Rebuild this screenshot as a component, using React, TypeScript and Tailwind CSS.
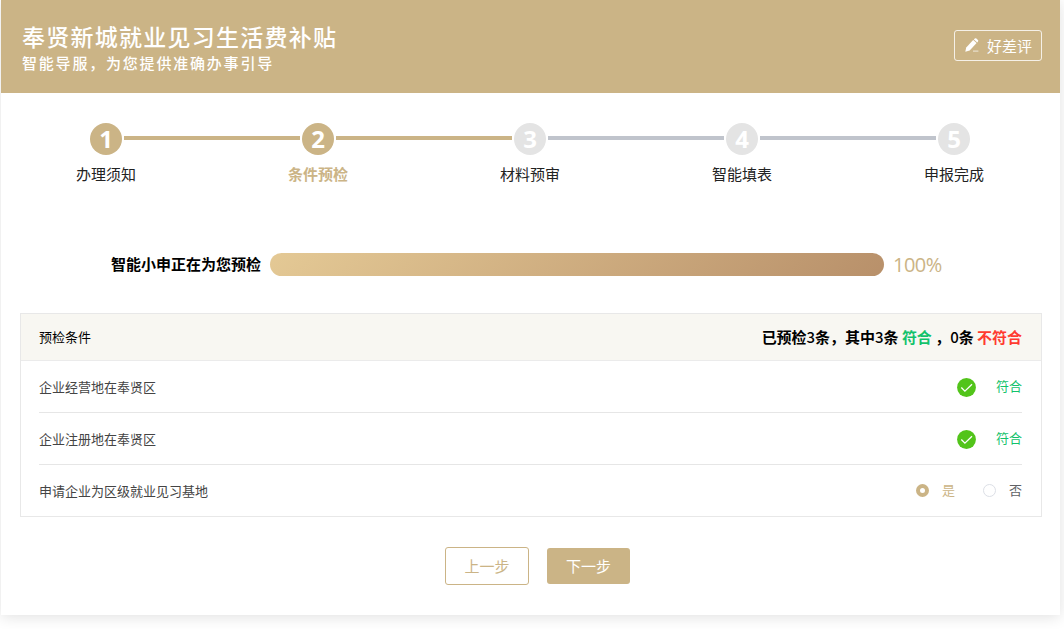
import React, { useState } from 'react';

type StepItem = { label: string; state: 'done' | 'active' | 'todo' };

const steps: StepItem[] = [
  { label: '办理须知', state: 'done' },
  { label: '条件预检', state: 'active' },
  { label: '材料预审', state: 'todo' },
  { label: '智能填表', state: 'todo' },
  { label: '申报完成', state: 'todo' }
];

const conditions = ['企业经营地在奉贤区', '企业注册地在奉贤区'];

const PencilIcon: React.FC = () => (
  <svg width="14" height="15" viewBox="0 0 14 15" fill="#fff">
    <path d="M1.2 9.4 8.2 2.1 11.6 5.1 4.7 12.6 0.3 13.8Z" />
    <path d="M8.9 1.4 9.8 0.6Q10.6 0 11.4 0.6L12.9 1.9Q13.7 2.7 13 3.5L12.3 4.4Z" />
    <path d="M8 12.6h5.4v1H8z" opacity="0.7" />
  </svg>
);

const CheckIcon: React.FC = () => (
  <svg width="19" height="19" viewBox="0 0 19 19" fill="none">
    <circle cx="9.5" cy="9.5" r="9.4" fill="#52c41a" />
    <path d="M4.3 9.5 7.9 13.2 15 6.2" stroke="#fff" strokeWidth="1.3" />
  </svg>
);

const Steps: React.FC = () => (
  <div className="flex pl-[89px] pt-[30px]">
    {steps.map((step, index) => (
      <React.Fragment key={step.label}>
        {index > 0 && (
          <div className={`mx-[2px] mt-[13px] h-1 w-[176px] shrink-0 ${index < 3 ? 'bg-[#cbb486]' : 'bg-[#c0c4cc]'}`} />
        )}
        <div className="flex w-8 shrink-0 flex-col items-center">
          <div
            className={`flex h-8 w-8 items-center justify-center rounded-full font-['Open_Sans'] text-[24px] font-bold leading-8 text-white ${
              step.state === 'todo' ? 'bg-[#e4e4e4]' : 'bg-[#cbb486]'
            }`}
          >
            {index + 1}
          </div>
          <span
            className={`mt-[8px] whitespace-nowrap text-[15px] leading-[22px] ${
              step.state === 'active' ? 'font-bold text-[#cbb486]' : 'text-[#222]'
            }`}
          >
            {step.label}
          </span>
        </div>
      </React.Fragment>
    ))}
  </div>
);

const App: React.FC = () => {
  const [isBase, setIsBase] = useState(true);

  return (
    <div className="h-[629px] overflow-hidden bg-white pl-px font-['Noto_Sans_CJK_SC',sans-serif]">
      <div className="h-[615px] w-[1059px] bg-white shadow-[0_2px_14px_rgba(0,0,0,0.12)]">
        <header className="flex h-[93px] justify-between bg-[#cbb486] pl-[21px] pr-[18px] text-white">
          <div className="pt-[21px]">
            <h1 className="text-[23px] font-medium leading-[30px] tracking-[1.25px]">奉贤新城就业见习生活费补贴</h1>
            <p className="mt-px text-[15px] font-medium leading-[22px] tracking-[1.8px]">智能导服，为您提供准确办事引导</p>
          </div>
          <button className="mt-[30px] flex h-[31px] w-[88px] items-center rounded-[3px] border border-white/80 pl-[10px] text-[15px] leading-[22px]">
            <PencilIcon />
            <span className="ml-[8px] whitespace-nowrap">好差评</span>
          </button>
        </header>

        <Steps />

        <div className="mt-[68px] flex h-[23px] items-center pl-[110px]">
          <span className="w-[150px] whitespace-nowrap pb-[2px] text-[15px] font-bold leading-[22px] text-black">智能小申正在为您预检</span>
          <div className="ml-[9px] h-[23px] w-[614px] rounded-full bg-[linear-gradient(135deg,#e4c995,#b8906a)]" />
          <span className="ml-[9px] font-['Open_Sans'] text-[20px] leading-[23px] tracking-[-0.5px] text-[#cbb486]">100%</span>
        </div>

        <section className="ml-[19px] mt-[37px] h-[204px] w-[1022px] border border-[#e8e8e8]">
          <div className="flex h-[47px] items-center justify-between border-b border-[#ebebeb] bg-[#f8f7f2] pl-[18px] pr-[19px] text-black">
            <span className="text-[13px]">预检条件</span>
            <div className="flex whitespace-pre pt-px text-[15px] font-bold tracking-[-0.03px]">
              <span>已预检<b className="font-medium">3</b>条，其中<b className="font-medium">3</b>条 </span>
              <span className="text-[#13c26b]">符合</span>
              <span> ，<b className="font-medium">0</b>条 </span>
              <span className="text-[#ff3b30]">不符合</span>
            </div>
          </div>
          <div className="pl-[18px] pr-[19px] text-[13px] text-[#444]">
            {conditions.map((condition) => (
              <div key={condition} className="flex h-[52px] items-center justify-between border-b border-[#e6e6e6]">
                <span className="pt-px">{condition}</span>
                <div className="flex items-center">
                  <div className="mr-[20px] pt-[2px]">
                    <CheckIcon />
                  </div>
                  <span className="pb-[2px] text-[#13c26b]">符合</span>
                </div>
              </div>
            ))}
            <div className="flex h-[51px] items-center justify-between">
              <span className="pt-px">申请企业为区级就业见习基地</span>
              <div className="flex items-center">
                <button onClick={() => setIsBase(true)} className="flex items-center">
                  <span className={`mr-[13px] h-[13px] w-[13px] rounded-full ${isBase ? 'border-[4.5px] border-[#cbb486]' : 'border border-[#dcdfe6]'}`} />
                  <span className={`pb-px ${isBase ? 'text-[#cbb486]' : 'text-[#606266]'}`}>是</span>
                </button>
                <button onClick={() => setIsBase(false)} className="ml-[28px] flex items-center">
                  <span className={`mr-[13px] h-[13px] w-[13px] rounded-full ${isBase ? 'border border-[#dcdfe6]' : 'border-[4.5px] border-[#cbb486]'}`} />
                  <span className={`pb-px ${isBase ? 'text-[#606266]' : 'text-[#cbb486]'}`}>否</span>
                </button>
              </div>
            </div>
          </div>
        </section>

        <div className="mt-[30px] flex items-center pl-[444px] text-[15px]">
          <button className="h-[38px] w-[84px] rounded-[3px] border border-[#cbb486] pt-px text-[#cbb486]">上一步</button>
          <button className="ml-[18px] h-[36px] w-[83px] rounded-[3px] bg-[#cbb486] pt-px text-white">下一步</button>
        </div>
      </div>
    </div>
  );
};

export default App;
